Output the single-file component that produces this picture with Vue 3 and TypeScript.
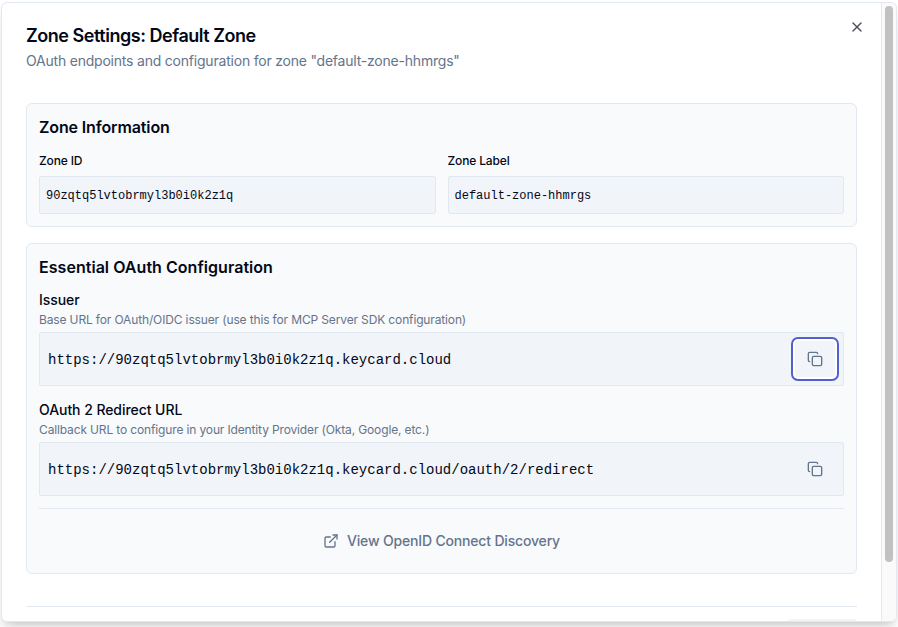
<script setup lang="ts">
import { ref } from 'vue'

interface ZoneField {
  label: string
  value: string
}

interface Endpoint {
  key: string
  label: string
  hint: string
  url: string
}

const zoneId = '90zqtq5lvtobrmyl3b0i0k2z1q'
const zoneLabel = 'default-zone-hhmrgs'
const baseUrl = `https://${zoneId}.keycard.cloud`

const fields: ZoneField[] = [
  { label: 'Zone ID', value: zoneId },
  { label: 'Zone Label', value: zoneLabel },
]

const endpoints: Endpoint[] = [
  {
    key: 'issuer',
    label: 'Issuer',
    hint: 'Base URL for OAuth/OIDC issuer (use this for MCP Server SDK configuration)',
    url: baseUrl,
  },
  {
    key: 'redirect',
    label: 'OAuth 2 Redirect URL',
    hint: 'Callback URL to configure in your Identity Provider (Okta, Google, etc.)',
    url: `${baseUrl}/oauth/2/redirect`,
  },
]

const focused = ref('issuer')
</script>

<template>
  <div class="stage">
    <div class="dialog" role="dialog">
      <div class="content">
        <header class="header">
          <div class="titles">
            <h2 class="title">Zone Settings: Default Zone</h2>
            <p class="description">OAuth endpoints and configuration for zone "{{ zoneLabel }}"</p>
          </div>
          <button class="close" aria-label="Close">
            <svg width="16" height="16" viewBox="0 0 24 24" fill="none" stroke="currentColor" stroke-width="2" stroke-linecap="round" stroke-linejoin="round">
              <path d="M18 6 6 18" />
              <path d="m6 6 12 12" />
            </svg>
          </button>
        </header>

        <section class="card">
          <h3 class="heading heading-info">Zone Information</h3>
          <div class="fields">
            <div v-for="field in fields" :key="field.label" class="field">
              <span class="field-label">{{ field.label }}</span>
              <code class="field-value">{{ field.value }}</code>
            </div>
          </div>
        </section>

        <section class="card">
          <h3 class="heading heading-oauth">Essential OAuth Configuration</h3>
          <div class="endpoints">
            <div v-for="item in endpoints" :key="item.key" class="endpoint" :class="item.key">
              <span class="endpoint-label">{{ item.label }}</span>
              <span class="hint">{{ item.hint }}</span>
              <div class="url-box">
                <code class="url">{{ item.url }}</code>
                <button class="copy" :class="{ focused: focused === item.key }" aria-label="Copy" @click="focused = item.key">
                  <svg width="16" height="16" viewBox="0 0 24 24" fill="none" stroke="currentColor" stroke-width="2" stroke-linecap="round" stroke-linejoin="round">
                    <rect width="14" height="14" x="8" y="8" rx="2" ry="2" />
                    <path d="M4 16c-1.1 0-2-.9-2-2V4c0-1.1.9-2 2-2h10c1.1 0 2 .9 2 2" />
                  </svg>
                </button>
              </div>
            </div>
          </div>
          <div class="discovery">
            <a class="link">
              <svg width="16" height="16" viewBox="0 0 24 24" fill="none" stroke="currentColor" stroke-width="2" stroke-linecap="round" stroke-linejoin="round">
                <path d="M15 3h6v6" />
                <path d="M10 14 21 3" />
                <path d="M18 13v6a2 2 0 0 1-2 2H5a2 2 0 0 1-2-2V8a2 2 0 0 1 2-2h6" />
              </svg>
              <span class="link-text">View OpenID Connect Discovery</span>
            </a>
          </div>
        </section>

        <footer class="footer">
          <button class="footer-button" aria-label="Close"></button>
        </footer>
      </div>
      <div class="scrollbar"><div class="thumb"></div></div>
    </div>
  </div>
</template>

<style>
body {
  margin: 0;
  background: #fff;
  overflow: hidden;
}
</style>

<style scoped>
.stage {
  box-sizing: border-box;
  height: 627px;
  padding: 2px 1px 5px;
  overflow: hidden;
  font-family: Inter, 'Liberation Sans', sans-serif;
  color: #020817;
}
.stage * {
  box-sizing: border-box;
}
h2, h3, p {
  margin: 0;
}
button {
  border: 0;
  padding: 0;
  background: none;
  color: inherit;
}
svg {
  display: block;
  flex: none;
}
.dialog {
  display: flex;
  height: 620px;
  border: 1px solid #e2e8f0;
  border-radius: 6px;
  background: #fff;
  overflow: hidden;
  box-shadow: 0 10px 15px -3px rgba(0, 0, 0, 0.14), 0 4px 6px -4px rgba(0, 0, 0, 0.14);
}
.content {
  flex: 1;
  min-width: 0;
  padding: 24px 24px 0;
}
.header {
  display: flex;
  justify-content: space-between;
  height: 76px;
}
.title {
  font-size: 18px;
  line-height: 18px;
  font-weight: 600;
  letter-spacing: -0.47px;
  white-space: nowrap;
}
.description {
  margin-top: 6px;
  font-size: 14px;
  line-height: 20px;
  color: #64748b;
  letter-spacing: -0.21px;
  white-space: nowrap;
}
.close {
  width: 16px;
  height: 16px;
  margin: -8px -8px 0 0;
  color: #4a4f5a;
}
.card {
  border: 1px solid #e2e8f0;
  border-radius: 6px;
  background: #f9fafc;
  padding: 12px;
}
.card + .card {
  margin-top: 16px;
}
.heading {
  padding-bottom: 2px;
  font-size: 16px;
  line-height: 22px;
  font-weight: 600;
}
.heading-info {
  letter-spacing: -0.13px;
}
.heading-oauth {
  letter-spacing: 0.04px;
}
.fields {
  display: grid;
  grid-template-columns: 1fr 1fr;
  gap: 12px;
  margin-top: 13px;
}
.field {
  display: flex;
  flex-direction: column;
  gap: 7px;
}
.field-label {
  font-size: 12px;
  line-height: 16px;
  font-weight: 500;
  letter-spacing: -0.14px;
}
.field-value,
.url {
  font-family: 'Liberation Mono', monospace;
}
.field-value {
  height: 38px;
  padding: 1px 6px 0;
  border: 1px solid #e2e8f0;
  border-radius: 2px;
  background: #f1f4f9;
  font-size: 12px;
  line-height: 36px;
}
.endpoints {
  display: flex;
  flex-direction: column;
  gap: 14px;
  margin-top: 10px;
}
.endpoint {
  display: flex;
  flex-direction: column;
}
.endpoint-label {
  font-size: 14px;
  line-height: 20px;
  font-weight: 500;
  letter-spacing: -0.06px;
}
.hint {
  margin: 2px 0 4px;
  font-size: 12px;
  line-height: 16px;
  color: #64748b;
  letter-spacing: -0.14px;
}
.url-box {
  display: flex;
  align-items: center;
  justify-content: space-between;
  height: 54px;
  padding: 8px;
  border: 1px solid #e2e8f0;
  border-radius: 2px;
  background: #f1f4f9;
}
.url {
  padding-top: 2px;
  font-size: 14px;
  line-height: 20px;
}
.copy {
  display: flex;
  align-items: center;
  justify-content: center;
  width: 40px;
  height: 36px;
  border-radius: 3px;
  color: #64748b;
}
.copy.focused {
  background: #f1f4f9;
  outline: none;
  box-shadow: 0 0 0 2px #fff, 0 0 0 4px #525fcf;
}
.discovery {
  margin-top: 12px;
  padding-top: 12px;
  border-top: 1px solid #e2e8f0;
}
.link {
  display: flex;
  align-items: center;
  justify-content: center;
  gap: 8px;
  height: 40px;
  font-size: 14px;
  font-weight: 500;
  color: #64748b;
  letter-spacing: -0.17px;
}
.link-text {
  padding-bottom: 1px;
}
.footer {
  display: flex;
  justify-content: flex-end;
  margin-top: 32px;
  padding-top: 12px;
  border-top: 1px solid #e2e8f0;
}
.footer-button {
  width: 70px;
  height: 36px;
  border-radius: 4px;
  background: #f1f4f9;
}
.scrollbar {
  flex: none;
  width: 15px;
  padding: 3px 3px 0;
  border-left: 1px solid #e8e8e8;
  background: #fafafa;
}
.thumb {
  width: 8px;
  height: 556px;
  border-radius: 4px;
  background: #c1c1c1;
}
</style>
